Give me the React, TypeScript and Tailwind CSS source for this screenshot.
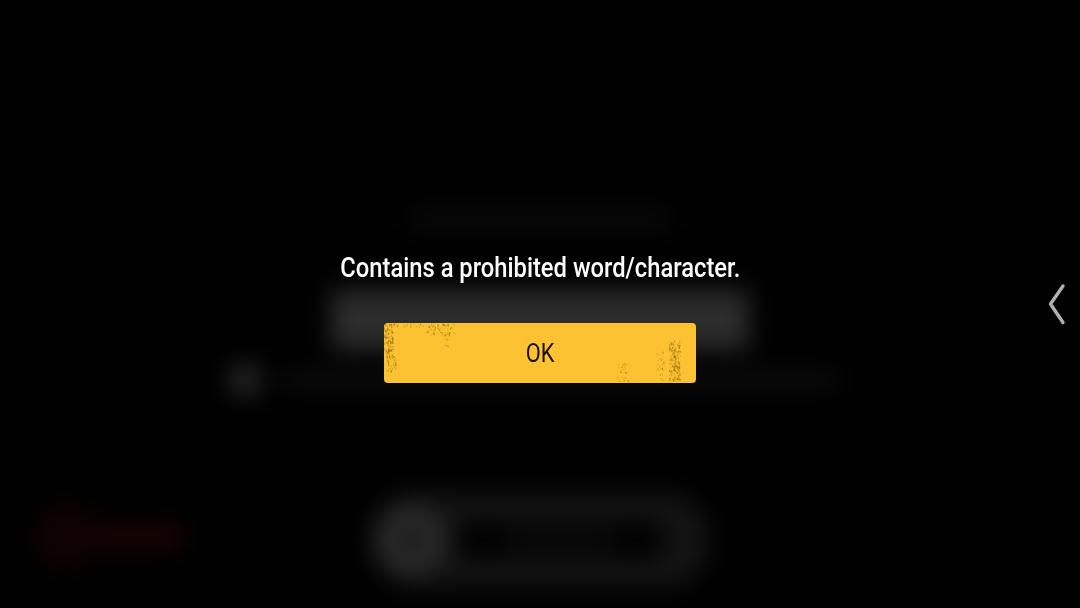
import { useMemo } from 'react'

// worn-paint specks on the OK button
function Grunge() {
  const specks = useMemo(() => {
    let seed = 23
    const rnd = () => {
      seed = (seed * 16807) % 2147483647
      return seed / 2147483647
    }
    const zones = [
      [0, 4, 9, 24, 110],
      [2, 26, 10, 22, 60],
      [0, 0, 40, 4, 36],
      [42, 0, 28, 12, 70],
      [60, 10, 4, 14, 10],
      [285, 16, 11, 41, 200],
      [272, 28, 8, 30, 26],
      [233, 40, 12, 19, 30],
    ]
    const out: { x: number; y: number; w: number; h: number; o: number }[] = []
    for (const [x, y, w, h, n] of zones) {
      for (let i = 0; i < n; i++) {
        out.push({
          x: x + rnd() * w,
          y: y + rnd() * h,
          w: 0.5 + rnd() * 0.9,
          h: 0.5 + rnd() * 1.8,
          o: 0.2 + rnd() * 0.45,
        })
      }
    }
    return out
  }, [])

  return (
    <svg className="absolute inset-0 blur-[0.4px]" width="312" height="60" viewBox="0 0 312 60">
      {specks.map((s, i) => (
        <rect key={i} x={s.x} y={s.y} width={s.w} height={s.h} fill="#8a6a12" opacity={s.o} />
      ))}
    </svg>
  )
}

function BlurredBackdrop() {
  return (
    <div className="absolute inset-0 blur-[12px] flex flex-col items-center pt-[208px]">
      <div className="w-[258px] h-[22px] bg-[#090909]" />
      <div className="mt-[60px] w-[418px] h-[60px] rounded-md bg-[#2c2c2c]" />
      <div className="mt-[14px] mr-[13px] flex items-center gap-[21px]">
        <div className="w-[32px] h-[32px] rounded-full bg-[#2a2a2a]" />
        <div className="w-[556px] h-[16px] bg-[#0e0e0e]" />
      </div>
      <div className="mt-[102px] w-full flex items-start pl-[34px]">
        <div className="flex items-center w-[148px] h-[78px]">
          <div className="w-[64px] h-[64px] rounded-full bg-[#100202]" />
          <div className="w-[84px] h-[24px] bg-[#1c0303]" />
        </div>
        <div className="ml-[188px] -mt-[6px] w-[340px] h-[96px] rounded-full bg-[#131313] flex items-center pl-[6px]">
          <div className="w-[70px] h-[70px] rounded-full bg-[#2b2b2b] flex items-center justify-center">
            <div className="w-[22px] h-[22px] rounded-full bg-[#0e0e0e]" />
          </div>
          <div className="ml-[12px] w-[204px] h-[38px] rounded-md bg-black flex items-center justify-center">
            <div className="w-[110px] h-[14px] bg-[#0e0e0e]" />
          </div>
        </div>
      </div>
    </div>
  )
}

export default function App() {
  return (
    <div className="relative w-[1080px] h-[608px] overflow-hidden bg-black font-['Roboto',sans-serif]">
      <BlurredBackdrop />

      <div className="relative flex flex-col items-center pt-[251px]">
        <p className="h-[34px] text-[27px] leading-[34px] font-medium text-white whitespace-nowrap scale-x-[0.88]">
          Contains a prohibited word/character.
        </p>
        <button className="relative mt-[38px] w-[312px] h-[60px] rounded-[4px] bg-[#fdc232] overflow-hidden text-[26px] text-[#14110a] flex items-center justify-center">
          <Grunge />
          <span className="relative scale-x-[0.84]">OK</span>
        </button>
      </div>

      <svg className="absolute right-[12px] top-[282px]" width="22" height="44" viewBox="0 0 22 44" fill="none">
        <path d="M17 4 L4.5 22 L17 40.5" stroke="#b0b0b0" strokeWidth="3.4" strokeLinecap="round" strokeLinejoin="round" />
      </svg>
    </div>
  )
}
